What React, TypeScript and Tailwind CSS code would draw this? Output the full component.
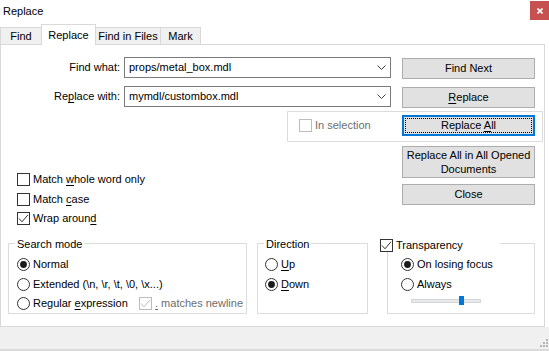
import React from 'react';

type CtlProps = { checked?: boolean; disabled?: boolean };

const CheckBox: React.FC<CtlProps> = ({ checked = false, disabled = false }) => {
  const c = disabled ? '#bcbcbc' : '#333333';
  return (
    <svg width="13" height="13" viewBox="0 0 13 13" className="shrink-0">
      <rect x="0.5" y="0.5" width="12" height="12" fill="#fff" stroke={c} />
      {checked && <polyline points="2,6.5 5,9.8 11,2.8" fill="none" stroke={c} strokeWidth="1" />}
    </svg>
  );
};

const Radio: React.FC<CtlProps> = ({ checked = false }) => (
  <svg width="13" height="13" viewBox="0 0 13 13" className="shrink-0">
    <circle cx="6.5" cy="6.5" r="6" fill="#fff" stroke="#333333" />
    {checked && <circle cx="6.5" cy="6.5" r="3.4" fill="#1a1a1a" />}
  </svg>
);

const Btn: React.FC<{ children: React.ReactNode; className?: string; focused?: boolean }> = ({
  children,
  className = '',
  focused = false,
}) =>
  focused ? (
    <div className={`w-[133px] h-[21px] bg-[#e1e1e1] border-2 border-[#0078d7] p-px ${className}`}>
      <div className="h-full border border-dotted border-black flex items-center justify-center">{children}</div>
    </div>
  ) : (
    <div
      className={`w-[133px] bg-[#e1e1e1] border border-[#adadad] flex items-center justify-center text-center ${className}`}
    >
      {children}
    </div>
  );

const Combo: React.FC<{ value: string }> = ({ value }) => (
  <div className="ml-[3px] w-[267px] h-[21px] bg-white border border-[#7a7a7a] flex items-center justify-between pl-[4px] pr-[4px]">
    <span>{value}</span>
    <svg width="9" height="5" viewBox="0 0 9 5">
      <polyline points="0.5,0.5 4.5,4.5 8.5,0.5" fill="none" stroke="#404040" strokeWidth="1" />
    </svg>
  </div>
);

const Row: React.FC<{ children: React.ReactNode; className?: string }> = ({ children, className = '' }) => (
  <div className={`h-[13px] flex items-center gap-[3px] ${className}`}>{children}</div>
);

const U: React.FC<{ children: React.ReactNode }> = ({ children }) => (
  <span className="underline underline-offset-[2px]">{children}</span>
);

export default function App() {
  return (
    <div className="w-[549px] h-[351px] bg-white flex flex-col overflow-hidden text-[11px] leading-[13px] text-black font-['Liberation_Sans',Arial,sans-serif]">
      {/* Title bar */}
      <div className="h-[24px] flex items-start justify-between shrink-0">
        <span className="ml-[3px] mt-[5px]">Replace</span>
        <div className="w-[19px] h-[19px] mt-px bg-[#c75050] flex items-center justify-center">
          <svg width="6" height="6" viewBox="0 0 6 6">
            <path d="M0.5 0.5 L5.5 5.5 M5.5 0.5 L0.5 5.5" stroke="#fff" strokeWidth="1.6" />
          </svg>
        </div>
      </div>

      {/* Tabs */}
      <div className="relative z-10 flex items-end h-[21px] shrink-0">
        <div className="w-[42px] h-[18px] border border-[#d9d9d9] bg-[#f0f0f0] flex items-center justify-center">Find</div>
        <div className="-ml-px w-[55px] h-[21px] border border-b-0 border-[#d9d9d9] bg-white flex items-center justify-center">
          Replace
        </div>
        <div className="-ml-px w-[66px] h-[18px] border border-[#d9d9d9] bg-[#f0f0f0] flex items-center justify-center">
          Find in Files
        </div>
        <div className="-ml-px w-[41px] h-[18px] border border-[#d9d9d9] bg-[#f0f0f0] flex items-center justify-center">Mark</div>
      </div>

      {/* Tab page */}
      <div className="-mt-px w-[545px] h-[283px] shrink-0 border border-[#d9d9d9] bg-white flex flex-col">
        <div className="flex items-start mt-[12px] h-[22px]">
          <div className="w-[120px] h-[21px] flex items-center justify-end pr-px">Find what:</div>
          <Combo value="props/metal_box.mdl" />
          <Btn className="ml-[11px] mt-px h-[21px]">Find Next</Btn>
        </div>
        <div className="flex items-start mt-[7px] h-[22px]">
          <div className="w-[120px] h-[21px] flex items-center justify-end pr-px">
            <span>
              Re<U>p</U>lace with:
            </span>
          </div>
          <Combo value="mymdl/custombox.mdl" />
          <Btn className="ml-[11px] mt-px h-[21px]">
            <span>
              <U>R</U>eplace
            </span>
          </Btn>
        </div>

        {/* In selection */}
        <div className="ml-[286px] mt-[3px] w-[256px] h-[31px] border border-[#dcdcdc] flex items-start">
          <Row className="w-[114px] pl-[11px] mt-[7px] text-[#6d6d6d]">
            <CheckBox disabled />
            <span>In selection</span>
          </Row>
          <Btn focused className="mt-[3px]">
            <span>
              Replace <U>A</U>ll
            </span>
          </Btn>
        </div>

        {/* Options + buttons */}
        <div className="flex h-[83px]">
          <div className="flex-1 pl-[16px] pt-[31px] flex flex-col">
            <Row>
              <CheckBox />
              <span>
                Match <U>w</U>hole word only
              </span>
            </Row>
            <Row className="mt-[7px]">
              <CheckBox />
              <span>
                Match <U>c</U>ase
              </span>
            </Row>
            <Row className="mt-[6px]">
              <CheckBox checked />
              <span>
                Wrap aroun<U>d</U>
              </span>
            </Row>
          </div>
          <div className="w-[133px] mr-[9px] pt-[4px] flex flex-col">
            <Btn className="h-[32px] leading-[14px]">
              <span>
                Replace All in All Opened
                <br />
                Documents
              </span>
            </Btn>
            <Btn className="mt-[6px] h-[21px]">Close</Btn>
          </div>
        </div>

        {/* Group boxes */}
        <div className="flex items-start mt-[18px] pl-[7px]">
          <div className="relative w-[239px] h-[71px] border border-[#dcdcdc] pl-[8px] pt-[14px] flex flex-col">
            <span className="absolute -top-[6px] left-[6px] px-[2px] bg-white">Search mode</span>
            <Row>
              <Radio checked />
              <span>Normal</span>
            </Row>
            <Row className="mt-[7px]">
              <Radio />
              <span>Extended (\n, \r, \t, \0, \x...)</span>
            </Row>
            <div className="mt-[6px] h-[13px] flex items-center">
              <div className="w-[122px] flex items-center gap-[3px]">
                <Radio />
                <span>
                  Regular <U>e</U>xpression
                </span>
              </div>
              <div className="flex items-center gap-[3px] text-[#6d6d6d]">
                <CheckBox checked disabled />
                <span>
                  <U>.</U> matches newline
                </span>
              </div>
            </div>
          </div>

          <div className="relative ml-[10px] w-[111px] h-[71px] border border-[#dcdcdc] pl-[7px] pt-[14px] flex flex-col">
            <span className="absolute -top-[6px] left-[6px] px-[2px] bg-white">Direction</span>
            <Row>
              <Radio />
              <span>
                <U>U</U>p
              </span>
            </Row>
            <Row className="mt-[7px]">
              <Radio checked />
              <span>
                <U>D</U>own
              </span>
            </Row>
          </div>

          <div className="relative ml-[19px] w-[148px] h-[71px] border border-[#dcdcdc] pl-[13px] pt-[14px] flex flex-col">
            <Row className="absolute -top-[5px] -left-[8px] w-[120px] bg-white">
              <CheckBox checked />
              <span>Transparency</span>
            </Row>
            <Row>
              <Radio checked />
              <span>On losing focus</span>
            </Row>
            <Row className="mt-[7px]">
              <Radio />
              <span>Always</span>
            </Row>
            <div className="relative mt-[5px] ml-[10px] w-[70px] h-[9px]">
              <div className="absolute top-[3px] left-0 w-full h-[4px] bg-[#e7eaea] border border-[#d6d6d6]" />
              <div className="absolute top-0 left-[48px] w-[5px] h-[9px] bg-[#0078d7]" />
            </div>
          </div>
        </div>
      </div>

      {/* Status strip */}
      <div className="flex-1 bg-[#f0f0f0] border-b-2 border-[#dadada] flex justify-end items-end pr-px pb-[2px]">
        <svg width="8" height="8" viewBox="0 0 8 8">
          <g fill="#b5b5b5">
            <rect x="6" y="0" width="2" height="2" />
            <rect x="3" y="3" width="2" height="2" />
            <rect x="6" y="3" width="2" height="2" />
            <rect x="0" y="6" width="2" height="2" />
            <rect x="3" y="6" width="2" height="2" />
            <rect x="6" y="6" width="2" height="2" />
          </g>
        </svg>
      </div>
    </div>
  );
}
